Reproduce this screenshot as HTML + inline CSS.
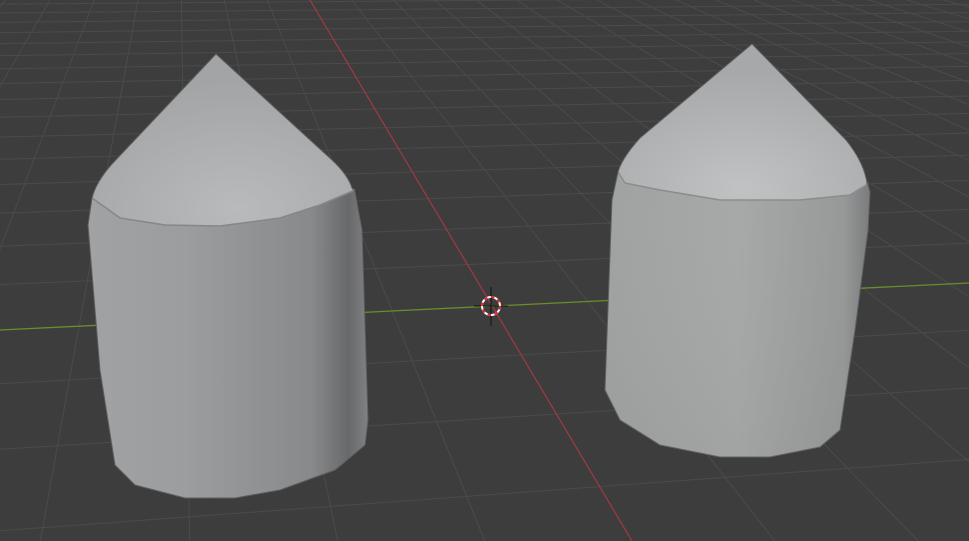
<!DOCTYPE html><html><head><style>html,body{margin:0;padding:0;background:#3d3d3d;overflow:hidden;width:969px;height:541px}svg{display:block}</style></head><body>
<svg id="s" width="969" height="541" viewBox="0 0 969 541" xmlns="http://www.w3.org/2000/svg">
<defs>
<linearGradient id="lb" x1="0" x2="1" y1="0" y2="0"><stop offset="0" stop-color="#a0a2a3"/><stop offset="0.35" stop-color="#9b9d9e"/><stop offset="0.8" stop-color="#88898b"/><stop offset="0.93" stop-color="#68696b"/><stop offset="1" stop-color="#808182"/></linearGradient>
<radialGradient id="lc" cx="0.55" cy="0.9" r="0.75"><stop offset="0" stop-color="#b8babc"/><stop offset="1" stop-color="#a2a4a5"/></radialGradient>
<linearGradient id="rb" x1="0" x2="1" y1="0" y2="0"><stop offset="0" stop-color="#a0a2a2"/><stop offset="0.5" stop-color="#a7a9a9"/><stop offset="0.9" stop-color="#979999"/><stop offset="1" stop-color="#7a7b7c"/></linearGradient>
<linearGradient id="rv" x1="0" x2="0" y1="0" y2="1"><stop offset="0" stop-color="#fff" stop-opacity="0.12"/><stop offset="0.25" stop-color="#fff" stop-opacity="0"/><stop offset="1" stop-color="#000" stop-opacity="0.03"/></linearGradient>
<radialGradient id="rc" cx="0.5" cy="0.92" r="0.75"><stop offset="0" stop-color="#c0c2c3"/><stop offset="1" stop-color="#a6a8a9"/></radialGradient>
<path id="L" d="M216,54 L332,160 Q348,175 352,188 L355,192 L362,230 L368,420 L365,445 L335,470 L280,490 L235,498 L185,498 L135,485 L115,465 L100,370 L88,225 L92,198 Q96,182 112,164 Z"/>
<path id="Rr" d="M752,44 L846,140 Q862,160 866,178 L870,192 L868,230 L855,330 L840,430 L820,447 L770,457 L720,457 L660,445 L620,420 L605,390 L612,200 L618,172 Q622,158 640,138 Z"/>
</defs>
<g id="grid" stroke="#4b4b4b" stroke-width="1" fill="none"></g>
<line x1="0" y1="330" x2="969" y2="283" stroke="#6a8e2a" stroke-width="1.3"/>
<line x1="310" y1="0" x2="632" y2="541" stroke="#a03a45" stroke-width="1.2"/>
<use href="#L" fill="url(#lb)"/>
<path d="M216,54 L332,160 Q348,175 352,188 L355,190 L320,205 L280,218 L220,226 L165,225 L120,218 L92,198 Q96,182 112,164 Z" fill="url(#lc)"/>
<polyline points="92,198 120,218 165,225 220,226 280,218 320,205 355,190" stroke="#858788" stroke-width="1.5" fill="none"/>
<use href="#L" fill="none" stroke="#5e5f60" stroke-width="1"/>
<use href="#Rr" fill="url(#rb)"/>
<use href="#Rr" fill="url(#rv)"/>
<path d="M752,44 L846,140 Q862,160 866,178 L866,185 L850,195 L800,200 L720,200 L660,190 L625,183 L618,172 Q622,158 640,138 Z" fill="url(#rc)"/>
<polyline points="618,172 625,183 660,190 720,200 800,200 850,195 866,185" stroke="#8a8c8d" stroke-width="1.5" fill="none"/>
<use href="#Rr" fill="none" stroke="#606162" stroke-width="1"/>
<line x1="491" y1="287" x2="491" y2="326" stroke="#111" stroke-width="1"/>
<line x1="474" y1="306" x2="508" y2="306" stroke="#111" stroke-width="1"/>
<circle cx="491" cy="306" r="9" fill="none" stroke="#fff" stroke-width="2"/>
<circle cx="491" cy="306" r="9" fill="none" stroke="#e02030" stroke-width="2" stroke-dasharray="3.5 3.5"/>
</svg>
<script>
(function(){
var O=[491,306],R=[178,-222],G=[8000,-58],a=0.085,b=0.013;
function P(u,v){var d=a*u+b*v+1;return d<=0.03?null:[(a*u*R[0]+b*v*G[0]+O[0])/d,(a*u*R[1]+b*v*G[1]+O[1])/d];}
var s='';
function seg(f){var pts=[];for(var t=-200;t<=200;t+=0.5){var p=f(t);if(p&&p[0]>-2000&&p[0]<3000&&p[1]>-300&&p[1]<1500)pts.push(p[0].toFixed(1)+','+p[1].toFixed(1));}
 if(pts.length>1){s+='<polyline points="'+pts.join(' ')+'"/>';}}
for(var k=-120;k<=120;k++){if(k===0)continue;seg(function(t){return P(k,t)});seg(function(t){return P(t,k)});}
document.getElementById('grid').innerHTML=s;
})();
</script>
</body></html>
